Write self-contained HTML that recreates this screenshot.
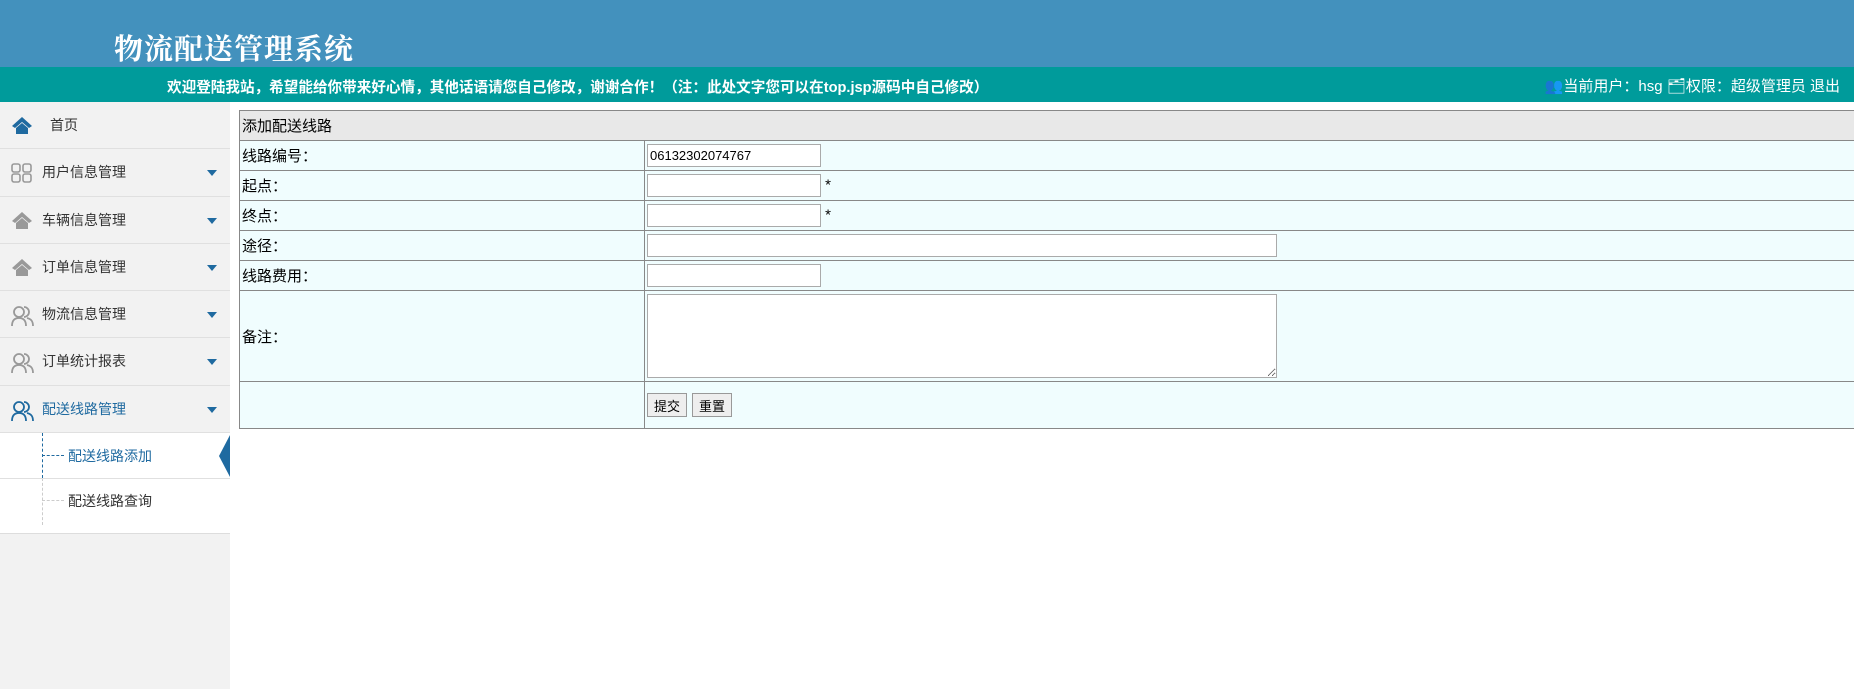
<!DOCTYPE html>
<html><head><meta charset="utf-8"><style>
*{margin:0;padding:0;box-sizing:border-box}
body{width:1854px;height:689px;overflow:hidden;background:#fff;font-family:"Liberation Sans","Noto Sans CJK SC",sans-serif;position:relative}
.hd{position:absolute;left:0;top:0;width:1854px;height:67px;background:#4391bd}
.title{position:absolute;left:114px;top:27px;font-size:29px;color:#fff;font-family:"Liberation Serif","Noto Serif CJK SC",serif;font-weight:bold;letter-spacing:1px}
.bar{position:absolute;left:0;top:67px;width:1854px;height:35px;background:#009b9b;color:#fff;font-size:14.6px;font-weight:bold}
.bar .l{position:absolute;left:167px;top:9px}
.bar .r{position:absolute;right:14px;top:8px;font-size:15px;font-weight:normal}
.side{position:absolute;left:0;top:102px;width:230px;height:587px;background:#f2f2f2}
.it{height:47.3px;border-bottom:1px solid #e0e0e0;position:relative;font-size:14px;color:#333;line-height:47px}
.it .t{position:absolute;left:42px}
.it .ic{position:absolute;left:11px;top:14px}
.it .ar{position:absolute;left:207px;top:21px;width:0;height:0;border-left:5px solid transparent;border-right:5px solid transparent;border-top:6px solid #1f6aa0}
.sub{background:#fff;height:101px;border-bottom:1px solid #ddd;position:relative}
.sub div{position:absolute;left:68px;font-size:14px}
table{position:absolute;left:239px;top:110px;width:1620px;border-collapse:collapse;border:1px solid #333;font-size:15px}
td{border:1px solid #888;background:#f0fdfe;padding:0 2px;height:30px}
td.h{background:#e8e8e8}
input,textarea{border:1px solid #aaa;height:23px;background:#fff;font-size:13px;padding:0 2px;vertical-align:middle;font-family:"Liberation Sans",sans-serif}
button{border:1px solid #999;background:#eee;font-size:13px;height:24px;padding:0 6px;margin-right:5px;font-family:"Liberation Sans","Noto Sans CJK SC",sans-serif}
</style></head><body>
<div class="hd"><div class="title">物流配送管理系统</div></div>
<div class="bar"><div class="l">欢迎登陆我站，希望能给你带来好心情，其他话语请您自己修改，谢谢合作！（注：此处文字您可以在top.jsp源码中自己修改）</div>
<div class="r">👥当前用户：hsg 🗂权限：超级管理员 退出</div></div>
<div class="side">
<div class="it"><svg class="ic" width="22" height="18"><path d="M11 1L1 10l3 2 7-6 7 6 3-2z M5 12v6h12v-6l-6-5z" fill="#1f6aa0"/></svg><span class="t" style="left:50px">首页</span></div>
<div class="it"><svg class="ic" width="22" height="20"><g fill="none" stroke="#999" stroke-width="1.6"><rect x="1" y="1" width="8" height="8" rx="2"/><rect x="12" y="1" width="8" height="8" rx="2"/><rect x="1" y="11" width="8" height="8" rx="2"/><rect x="12" y="11" width="8" height="8" rx="2"/></g></svg><span class="t">用户信息管理</span><i class="ar"></i></div>
<div class="it"><svg class="ic" width="22" height="18"><path d="M11 1L1 10l3 2 7-6 7 6 3-2z M5 12v6h12v-6l-6-5z" fill="#999"/></svg><span class="t">车辆信息管理</span><i class="ar"></i></div>
<div class="it"><svg class="ic" width="22" height="18"><path d="M11 1L1 10l3 2 7-6 7 6 3-2z M5 12v6h12v-6l-6-5z" fill="#999"/></svg><span class="t">订单信息管理</span><i class="ar"></i></div>
<div class="it"><svg class="ic" width="24" height="22"><g fill="none" stroke="#999" stroke-width="1.8"><circle cx="8" cy="7" r="5"/><path d="M1 21c0-6 3-8 7-8s7 2 7 8"/><path d="M13 2a5 5 0 0 1 0 10M16 13c4 1 6 3 6 8"/></g></svg><span class="t">物流信息管理</span><i class="ar"></i></div>
<div class="it"><svg class="ic" width="24" height="22"><g fill="none" stroke="#999" stroke-width="1.8"><circle cx="8" cy="7" r="5"/><path d="M1 21c0-6 3-8 7-8s7 2 7 8"/><path d="M13 2a5 5 0 0 1 0 10M16 13c4 1 6 3 6 8"/></g></svg><span class="t">订单统计报表</span><i class="ar"></i></div>
<div class="it" style="color:#1f6aa0"><svg class="ic" width="24" height="22"><g fill="none" stroke="#1f6aa0" stroke-width="1.8"><circle cx="8" cy="7" r="5"/><path d="M1 21c0-6 3-8 7-8s7 2 7 8"/><path d="M13 2a5 5 0 0 1 0 10M16 13c4 1 6 3 6 8"/></g></svg><span class="t">配送线路管理</span><i class="ar"></i></div>
<div class="sub">
<span style="position:absolute;left:42px;top:0;height:45px;border-left:1px dashed #1f6aa0"></span>
<span style="position:absolute;left:42px;top:45px;height:47px;border-left:1px dashed #ccc"></span>
<span style="position:absolute;left:42px;top:22px;width:22px;border-top:1px dashed #1f6aa0"></span>
<span style="position:absolute;left:42px;top:67px;width:22px;border-top:1px dashed #ccc"></span>
<span style="position:absolute;left:0;top:45px;width:230px;border-top:1px solid #e0e0e0"></span>
<div style="top:13px;color:#1f6aa0">配送线路添加</div>
<div style="top:58px;color:#333">配送线路查询</div>
<svg style="position:absolute;left:219px;top:2px" width="11" height="42"><path d="M11 0L0 21 11 42z" fill="#1f6aa0"/></svg>
</div>
</div>
<table>
<tr><td class="h" colspan="2" style="height:30px">添加配送线路</td></tr>
<tr><td style="width:405px">线路编号：</td><td><input style="width:174px" value="06132302074767"></td></tr>
<tr><td>起点：</td><td><input style="width:174px"> *</td></tr>
<tr><td>终点：</td><td><input style="width:174px"> *</td></tr>
<tr><td style="height:29px">途径：</td><td><input style="width:630px"></td></tr>
<tr><td style="height:29px">线路费用：</td><td><input style="width:174px"></td></tr>
<tr><td style="height:91px">备注：</td><td><textarea style="width:630px;height:84px;vertical-align:middle"></textarea></td></tr>
<tr><td style="height:47px"></td><td><button>提交</button><button>重置</button></td></tr>
</table>
</body></html>
